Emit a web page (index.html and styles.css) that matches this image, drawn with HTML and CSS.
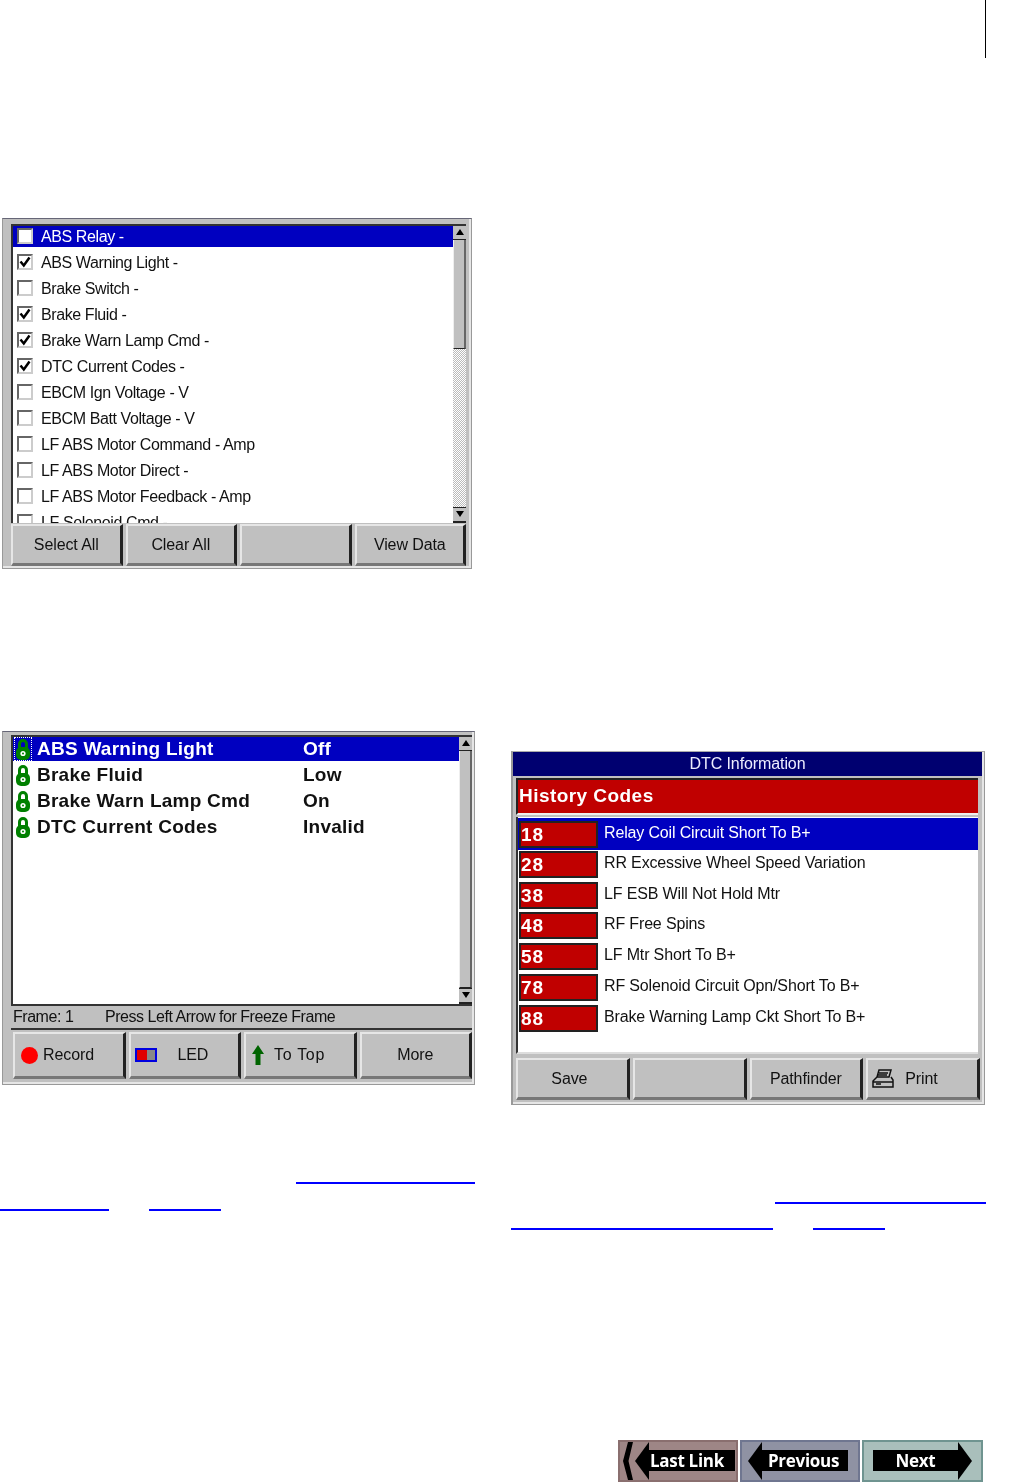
FILE: index.html
```html
<!DOCTYPE html>
<html lang="en">
<head>
    <meta charset="UTF-8">
    <title>Scan Tool Screens</title>
    <link rel="stylesheet" href="styles.css">
</head>
<body>
<div class="page">
    <div class="top-rule"><span></span></div>

    <div class="panel data-list">
        <div class="list-wrap">
            <div class="list">
                <div class="row active"><span class="check"></span>ABS Relay -</div>
                <div class="row"><span class="check on"><svg viewBox="0 0 12 12"><path d="M1.500 5.500 4.800 9.500 10.500 1.500" /></svg></span>ABS Warning Light -</div>
                <div class="row"><span class="check"></span>Brake Switch -</div>
                <div class="row"><span class="check on"><svg viewBox="0 0 12 12"><path d="M1.500 5.500 4.800 9.500 10.500 1.500" /></svg></span>Brake Fluid -</div>
                <div class="row"><span class="check on"><svg viewBox="0 0 12 12"><path d="M1.500 5.500 4.800 9.500 10.500 1.500" /></svg></span>Brake Warn Lamp Cmd -</div>
                <div class="row"><span class="check on"><svg viewBox="0 0 12 12"><path d="M1.500 5.500 4.800 9.500 10.500 1.500" /></svg></span>DTC Current Codes -</div>
                <div class="row"><span class="check"></span>EBCM Ign Voltage - V</div>
                <div class="row"><span class="check"></span>EBCM Batt Voltage - V</div>
                <div class="row"><span class="check"></span>LF ABS Motor Command - Amp</div>
                <div class="row"><span class="check"></span>LF ABS Motor Direct -</div>
                <div class="row"><span class="check"></span>LF ABS Motor Feedback - Amp</div>
                <div class="row"><span class="check"></span>LF Solenoid Cmd -</div>
            </div>
            <div class="scrollbar">
                <span class="arrow up"></span>
                <span class="thumb thumb-short"></span>
                <span class="track"></span>
                <span class="arrow down"></span>
            </div>
        </div>
        <div class="btns">
            <div class="btn">Select All</div>
            <div class="btn">Clear All</div>
            <div class="btn"></div>
            <div class="btn">View Data</div>
        </div>
    </div>

    <div class="columns">
        <div class="col">
            <div class="panel data-view">
                <div class="list-wrap">
                    <div class="list">
                        <div class="bold-row active">
                            <svg class="lock" viewBox="0 0 16 22"><path d="M4.500 10V6a3.500 3.500 0 0 1 7 0v4" fill="none" stroke="#008000" stroke-width="3" /><rect x="1" y="9" width="14" height="13" rx="5" fill="#008000" /><circle cx="8" cy="15.500" r="2.600" fill="#fff" /><circle cx="8" cy="15.500" r="1" fill="#008000" /></svg>
                            <span class="name">ABS Warning Light</span><span class="val">Off</span>
                        </div>
                        <div class="bold-row">
                            <svg class="lock" viewBox="0 0 16 22"><path d="M4.500 10V6a3.500 3.500 0 0 1 7 0v4" fill="none" stroke="#008000" stroke-width="3" /><rect x="1" y="9" width="14" height="13" rx="5" fill="#008000" /><circle cx="8" cy="15.500" r="2.600" fill="#fff" /><circle cx="8" cy="15.500" r="1" fill="#008000" /></svg>
                            <span class="name">Brake Fluid</span><span class="val">Low</span>
                        </div>
                        <div class="bold-row">
                            <svg class="lock" viewBox="0 0 16 22"><path d="M4.500 10V6a3.500 3.500 0 0 1 7 0v4" fill="none" stroke="#008000" stroke-width="3" /><rect x="1" y="9" width="14" height="13" rx="5" fill="#008000" /><circle cx="8" cy="15.500" r="2.600" fill="#fff" /><circle cx="8" cy="15.500" r="1" fill="#008000" /></svg>
                            <span class="name">Brake Warn Lamp Cmd</span><span class="val">On</span>
                        </div>
                        <div class="bold-row">
                            <svg class="lock" viewBox="0 0 16 22"><path d="M4.500 10V6a3.500 3.500 0 0 1 7 0v4" fill="none" stroke="#008000" stroke-width="3" /><rect x="1" y="9" width="14" height="13" rx="5" fill="#008000" /><circle cx="8" cy="15.500" r="2.600" fill="#fff" /><circle cx="8" cy="15.500" r="1" fill="#008000" /></svg>
                            <span class="name">DTC Current Codes</span><span class="val">Invalid</span>
                        </div>
                    </div>
                    <div class="scrollbar">
                        <span class="arrow up"></span>
                        <span class="thumb thumb-long"></span>
                        <span class="arrow down"></span>
                    </div>
                </div>
                <div class="status"><span class="frame">Frame: 1</span><span>Press Left Arrow for Freeze Frame</span></div>
                <div class="btns">
                    <div class="btn btn-icon"><span class="rec"></span>Record</div>
                    <div class="btn btn-icon btn-led"><span class="led"></span><span class="led-label">LED</span></div>
                    <div class="btn btn-icon"><svg class="to-top" viewBox="0 0 12 20"><path d="M6 0 12 9H8.500V20H3.500V9H0Z" fill="#006400" /></svg><span class="top-label">To Top</span></div>
                    <div class="btn">More</div>
                </div>
            </div>
            <div class="links links-left">
                <div class="link-line end"><a class="link w179"></a></div>
                <div class="link-line"><a class="link w109"></a><a class="link w72 gap40"></a></div>
            </div>
        </div>

        <div class="col col-right">
            <div class="panel dtc">
                <div class="dtc-title">DTC Information</div>
                <div class="dtc-head">History Codes</div>
                <div class="dtc-list">
                    <div class="dtc-row active"><span class="code">18</span><span class="desc">Relay Coil Circuit Short To B+</span></div>
                    <div class="dtc-row"><span class="code">28</span><span class="desc">RR Excessive Wheel Speed Variation</span></div>
                    <div class="dtc-row"><span class="code">38</span><span class="desc">LF ESB Will Not Hold Mtr</span></div>
                    <div class="dtc-row"><span class="code">48</span><span class="desc">RF Free Spins</span></div>
                    <div class="dtc-row"><span class="code">58</span><span class="desc">LF Mtr Short To B+</span></div>
                    <div class="dtc-row"><span class="code">78</span><span class="desc">RF Solenoid Circuit Opn/Short To B+</span></div>
                    <div class="dtc-row"><span class="code">88</span><span class="desc">Brake Warning Lamp Ckt Short To B+</span></div>
                </div>
                <div class="btns">
                    <div class="btn btn-save">Save</div>
                    <div class="btn"></div>
                    <div class="btn">Pathfinder</div>
                    <div class="btn btn-icon btn-print">
                        <svg class="printer" viewBox="0 0 24 20"><path d="M8 1H20L18 8H6Z M6 8 2 12V18H22V11L20 8 M2 13H22 M8 4H17 M7 6H16 M5 15H10" fill="none" stroke="#111" stroke-width="1.500" /></svg>
                        <span class="print-label">Print</span>
                    </div>
                </div>
            </div>
            <div class="links links-right">
                <div class="link-line end"><a class="link w211"></a></div>
                <div class="link-line"><a class="link w262"></a><a class="link w72 gap40"></a></div>
            </div>
        </div>
    </div>

    <nav class="page-nav">
        <div class="nav-btn last">
            <span class="chev"></span><span class="head-left"></span><span class="bar">Last Link</span>
        </div>
        <div class="nav-btn prev">
            <span class="head-left"></span><span class="bar">Previous</span>
        </div>
        <div class="nav-btn next">
            <span class="bar">Next</span><span class="head-right"></span>
        </div>
    </nav>
</div>
</body>
</html>
```

FILE: styles.css
```css
html,body{
    margin:0;
    padding:0;
    background:#fff;
}
.page{
    width:1036px;
    height:1482px;
    overflow:hidden;
    font-family:"Liberation Sans",Arial,sans-serif;
    font-size:16px;
    letter-spacing:-0.1px;
    color:#111;
}
.top-rule{
    height:58px;
    padding-left:985px;
}
.top-rule span{
    display:block;
    width:1px;
    height:100%;
    background:#000;
}

/* shared window look */
.panel{
    box-sizing:border-box;
    background:#c0c0c0;
    border:1px solid #999;
    border-top-color:#667;
    box-shadow:inset -2px -2px 0 #e6e6e6;
    filter:blur(.35px);
}
.list-wrap{
    display:flex;
    background:#fff;
    border-top:2px solid #333;
    border-left:2px solid #333;
}
.list{
    flex:1;
    overflow:hidden;
}
.btns{
    display:grid;
    grid-template-columns:repeat(4,1fr);
    gap:3px;
}
.btn{
    box-sizing:border-box;
    display:flex;
    align-items:center;
    justify-content:center;
    background:#c0c0c0;
    border-top:2px solid #e6e6e6;
    border-left:2px solid #e6e6e6;
    border-right:3px solid #222;
    border-bottom:3px solid #777;
}

/* scrollbar */
.scrollbar{
    width:13px;
    flex:none;
    display:flex;
    flex-direction:column;
    background:#c0c0c0;
}
.arrow{
    height:13px;
    flex:none;
    background:#c0c0c0;
    border-bottom:1px solid #222;
    position:relative;
}
.arrow::after{
    content:'';
    position:absolute;
    left:3px;
    border-left:4px solid transparent;
    border-right:4px solid transparent;
}
.arrow.up::after{
    top:3px;
    border-bottom:6px solid #000;
}
.arrow.down{
    border-top:1px solid #222;
    border-bottom:2px solid #222;
}
.arrow.down::after{
    top:3px;
    border-top:6px solid #000;
}
.thumb{
    display:block;
    background:#c0c0c0;
    border-left:1px solid #eee;
    border-right:2px solid #666;
    border-bottom:1px solid #222;
}
.thumb-short{
    height:108px;
}
.thumb-long{
    flex:1;
}
.track{
    flex:1;
    background-color:#fff;
    background-image:conic-gradient(#bbb 25%,#fff 0 50%,#bbb 0 75%,#fff 0);
    background-size:2px 2px;
}

/* checkbox list */
.data-list{
    width:470px;
    height:351px;
    margin:160px 0 0 2px;
    padding:5px 5px 0 8px;
}
.data-list .list-wrap{
    height:297px;
}
.row{
    height:21px;
    margin-bottom:5px;
    line-height:21px;
    padding-left:4px;
    display:flex;
    align-items:center;
    letter-spacing:-.4px;
    white-space:nowrap;
}
.row.active{
    background:#0000c0;
    color:#fff;
}
.check{
    box-sizing:border-box;
    width:16px;
    height:16px;
    margin:-2px 8px 0 0;
    flex:none;
    background:#fff;
    border:2px solid #666;
    border-right-color:#ccc;
    border-bottom-color:#ccc;
}
.check svg{
    display:block;
    width:12px;
    height:12px;
    fill:none;
    stroke:#000;
    stroke-width:2.500;
}
.data-list .btns{
    height:42px;
    margin-top:1px;
}

/* data view */
.columns{
    display:grid;
    grid-template-columns:511px 475px;
    margin-top:162px;
}
.data-view{
    width:473px;
    height:354px;
    margin-left:2px;
    padding:3px 2px 0 8px;
}
.data-view .list-wrap{
    height:267px;
    border-bottom:2px solid #333;
}
.bold-row{
    height:24px;
    margin-bottom:2px;
    display:flex;
    align-items:center;
    padding-left:2px;
    font-size:19px;
    font-weight:bold;
    letter-spacing:.25px;
    white-space:nowrap;
}
.bold-row.active{
    background:#0000c0;
    color:#fff;
}
.lock{
    width:16px;
    height:22px;
    flex:none;
    margin-right:6px;
}
.active .lock{
    outline:1px dotted #fff;
}
.name{
    width:266px;
}
.status{
    height:22px;
    line-height:22px;
    padding-left:2px;
    border-bottom:2px solid #333;
    letter-spacing:-.46px;
    display:flex;
}
.frame{
    width:92px;
}
.data-view .btns{
    height:47px;
    margin:2px 0 0 2px;
}
.btn-icon{
    justify-content:flex-start;
    padding-left:6px;
}
.rec{
    width:17px;
    height:17px;
    border-radius:50%;
    background:#f00;
    margin-right:5px;
}
.btn-led{
    padding-left:4px;
}
.led{
    box-sizing:border-box;
    width:22px;
    height:14px;
    border:2px solid #0000e0;
    background:linear-gradient(90deg,#e00000 55%,#888 55%);
}
.led-label{
    margin-left:21px;
}
.to-top{
    width:12px;
    height:20px;
    margin-right:10px;
}
.top-label{
    letter-spacing:.7px;
}

/* dtc window */
.col-right{
    padding-top:20px;
}
.dtc{
    width:474px;
    height:354px;
    padding:0 2px 0 0;
    border-left-width:2px;
    border-top-color:#aaa;
}
.dtc-title{
    height:24px;
    line-height:24px;
    margin-bottom:2px;
    background:#000070;
    color:#eef;
    text-align:center;
}
.dtc-head{
    box-sizing:border-box;
    height:37px;
    line-height:32px;
    margin:0 4px 2px 3px;
    padding-left:1px;
    background:#c00000;
    color:#fff;
    font-size:19px;
    font-weight:bold;
    letter-spacing:.45px;
    border-top:2px solid #222;
    border-left:2px solid #222;
    border-bottom:2px solid #eee;
}
.dtc-list{
    height:237px;
    margin:0 4px 0 3px;
    background:#fff;
    border-left:2px solid #333;
    box-sizing:border-box;
    padding-top:1px;
    border-bottom:2px solid #ddd;
}
.dtc-row{
    height:30.8px;
    display:flex;
    align-items:center;
    padding-left:1px;
    letter-spacing:-.15px;
    white-space:nowrap;
}
.dtc-row.active{
    background:#0000c0;
    color:#fff;
    height:32px;
    margin-bottom:-1px;
}
.desc{
    margin-bottom:3px;
}
.code{
    box-sizing:border-box;
    width:79px;
    height:27px;
    line-height:24px;
    margin-right:6px;
    background:#c00000;
    border:2px solid #222;
    color:#fff;
    font-size:19px;
    font-weight:bold;
    letter-spacing:1px;
}
.dtc .btns{
    height:42px;
    margin:4px 2px 0 3px;
}
.btn-save{
    padding-right:6px;
}
.btn-print{
    padding-left:3px;
}
.printer{
    width:24px;
    height:20px;
    flex:none;
}
.print-label{
    margin-left:10px;
}

/* links with their text dropped */
.links{
    width:475px;
    margin-top:72px;
}
.link-line{
    display:flex;
    align-items:flex-end;
    height:27px;
}
.links-right .link-line + .link-line{
    height:26px;
}
.link-line.end{
    justify-content:flex-end;
}
.link{
    display:block;
    height:2px;
    background:#00f;
}
.w179{width:179px;}
.w109{width:109px;}
.w211{width:211px;}
.w262{width:262px;}
.w72{width:72px;}
.gap40{margin-left:40px;}

/* bottom page nav */
.page-nav{
    display:flex;
    gap:2px;
    margin-top:210px;
    margin-left:618px;
    filter:blur(.5px);
}
.nav-btn{
    box-sizing:border-box;
    width:120px;
    height:42px;
    display:flex;
    align-items:center;
    border:2px solid #888;
}
.nav-btn.last{
    background:#9e8686;
    border-color:#8a6f6f;
    padding-left:3px;
}
.nav-btn.prev{
    background:#8f92a3;
    border-color:#6f7690;
    padding-left:6px;
}
.nav-btn.next{
    background:#a9bfbb;
    border-color:#6f9490;
    padding-left:9px;
    width:121px;
}
.bar{
    height:21px;
    line-height:21px;
    margin-top:-1px;
    background:#000;
    color:#fff;
    font-family:"Open Sans","Liberation Sans",sans-serif;
    font-size:17px;
    font-weight:bold;
    letter-spacing:-.3px;
    flex:none;
}
.last .bar{
    width:85px;
    padding-left:1px;
}
.prev .bar{
    width:80px;
    padding-left:6px;
}
.next .bar{
    width:85px;
    text-align:center;
}
.chev{
    width:10px;
    height:38px;
    background:#000;
    clip-path:polygon(100% 0,55% 50%,100% 100%,50% 100%,0 50%,50% 0);
    margin-right:2px;
}
.head-left,.head-right{
    width:14px;
    height:38px;
    background:#000;
    flex:none;
}
.head-left{
    clip-path:polygon(100% 0,100% 100%,0 50%);
}
.head-right{
    clip-path:polygon(0 0,100% 50%,0 100%);
}
```
